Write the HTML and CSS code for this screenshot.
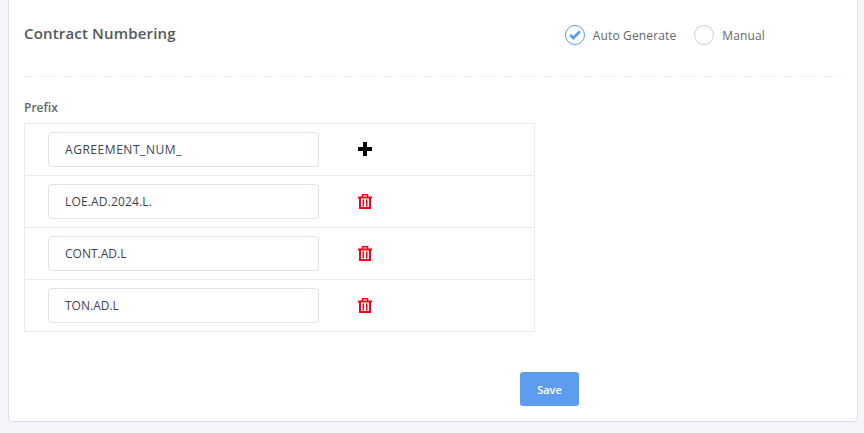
FILE: index.html
```html
<!DOCTYPE html>
<html lang="en">
<head>
<meta charset="utf-8">
<title>Contract Numbering</title>
<link rel="stylesheet" href="styles.css">
</head>
<body>
<main class="card">
  <header class="head">
    <h2 class="title">Contract Numbering</h2>
    <div class="options">
      <label class="option">
        <span class="radio radio-on">
          <svg width="12" height="10" viewBox="0 0 12 10"><path d="M1.2 5 4.4 8 10.8 1.4" fill="none" stroke="#5c9cee" stroke-width="2.8"/></svg>
        </span>
        Auto Generate
      </label>
      <label class="option">
        <span class="radio"></span>
        Manual
      </label>
    </div>
  </header>
  <div class="field-label">Prefix</div>
  <div class="table">
    <div class="row">
      <div class="input input-wide">AGREEMENT_NUM_</div>
      <svg class="icon" width="16" height="16" viewBox="0 0 16 16"><path d="M6 1h4v5h5v4h-5v5H6v-5H1V6h5z" fill="#000"/></svg>
    </div>
    <div class="row">
      <div class="input input-mid">LOE.AD.2024.L.</div>
      <svg class="icon" width="16" height="16" viewBox="0 0 16 16"><path d="M5.4 4V1.7h5.2V4" fill="none" stroke="#ff0014" stroke-width="1.4"/><path d="M1 4.5h14M3 5v10h10V5" fill="none" stroke="#ff0014" stroke-width="2"/><path d="M6.3 6.5v7M9.7 6.5v7" fill="none" stroke="#ff0014" stroke-width="1.5"/></svg>
    </div>
    <div class="row">
      <div class="input">CONT.AD.L</div>
      <svg class="icon" width="16" height="16" viewBox="0 0 16 16"><path d="M5.4 4V1.7h5.2V4" fill="none" stroke="#ff0014" stroke-width="1.4"/><path d="M1 4.5h14M3 5v10h10V5" fill="none" stroke="#ff0014" stroke-width="2"/><path d="M6.3 6.5v7M9.7 6.5v7" fill="none" stroke="#ff0014" stroke-width="1.5"/></svg>
    </div>
    <div class="row">
      <div class="input">TON.AD.L</div>
      <svg class="icon" width="16" height="16" viewBox="0 0 16 16"><path d="M5.4 4V1.7h5.2V4" fill="none" stroke="#ff0014" stroke-width="1.4"/><path d="M1 4.5h14M3 5v10h10V5" fill="none" stroke="#ff0014" stroke-width="2"/><path d="M6.3 6.5v7M9.7 6.5v7" fill="none" stroke="#ff0014" stroke-width="1.5"/></svg>
    </div>
  </div>
  <div class="actions"><button class="save" type="button">Save</button></div>
</main>
</body>
</html>
```

FILE: styles.css
```css
* { box-sizing: border-box; }
html, body { margin: 0; height: 433px; overflow: hidden; }
body {
  background: #f3f5fa;
  font-family: "Open Sans", "Noto Sans", sans-serif;
  padding: 0 6px 0 8px;
}
.card {
  height: 422px;
  background: #fff;
  border: 1px solid #d8dfe6;
  border-top: 0;
  border-radius: 0 0 5px 5px;
  padding: 0 15px 0 15px;
}
.head {
  height: 77px;
  border-bottom: 1px dashed #ebeef2;
  display: flex;
  justify-content: space-between;
  padding: 23px 77px 0 0;
}
.title {
  margin: 0;
  font-size: 15px;
  line-height: 20px;
  font-weight: 600;
  letter-spacing: .17px;
  color: #55585d;
}
.options { display: flex; gap: 18px; height: 24px; }
.option {
  display: flex;
  align-items: center;
  gap: 8px;
  font-size: 12px;
  letter-spacing: .14px;
  color: #63666d;
}
.radio {
  width: 20px;
  height: 20px;
  border: 1px solid #c9cccf;
  border-radius: 50%;
  display: flex;
  align-items: center;
  justify-content: center;
}
.radio-on { border-color: #5c9cee; }
.field-label {
  margin-top: 22px;
  font-size: 12px;
  line-height: 18px;
  font-weight: 600;
  color: #63676c;
}
.table {
  width: 511px;
  margin-top: 6px;
  border: 1px solid #e8ecef;
  border-bottom: 0;
}
.row {
  height: 52px;
  border-bottom: 1px solid #e8ecef;
  display: flex;
  align-items: center;
  padding: 0 0 1px 23px;
}
.input {
  width: 271px;
  height: 35px;
  border: 1px solid #dce6e8;
  border-radius: 4px;
  padding: 0 16px;
  font-size: 12px;
  line-height: 33px;
  color: #3f4254;
}
.input-wide { letter-spacing: .55px; }
.input-mid { letter-spacing: .15px; }
.icon { margin-left: 38px; }
.actions { display: flex; margin-top: 40px; padding-left: 496px; }
.save {
  width: 59px;
  height: 34px;
  border: 0;
  border-radius: 3px;
  background: #5e9cef;
  color: #fff;
  font: 600 11px "Open Sans", "Noto Sans", sans-serif;
}
```
